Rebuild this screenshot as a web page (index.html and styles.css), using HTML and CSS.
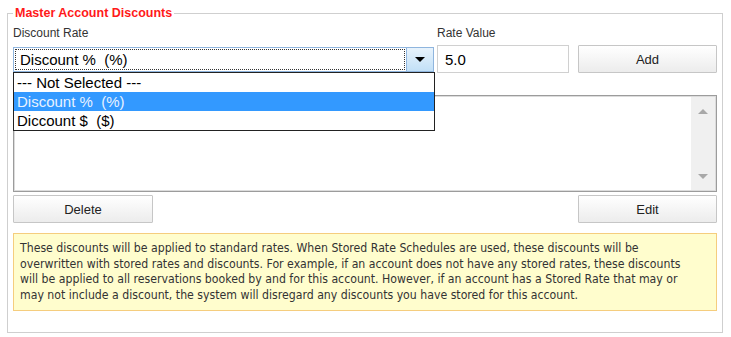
FILE: index.html
```html
<!DOCTYPE html>
<html lang="en">
<head>
    <meta charset="UTF-8">
    <title>Master Account Discounts</title>
    <link rel="stylesheet" href="styles.css">
</head>
<body>
    <fieldset class="panel">
        <legend>Master Account Discounts</legend>

        <!-- Linha de entrada: tipo, valor e botão Add -->
        <div class="entry-row">
            <div class="field field-type">
                <label>Discount Rate</label>
                <div class="select-wrap">
                    <div class="select">
                        <span class="select-value">Discount %  (%)</span>
                        <span class="select-arrow"></span>
                    </div>
                    <ul class="select-list">
                        <li>--- Not Selected ---</li>
                        <li class="selected">Discount %  (%)</li>
                        <li>Diccount $  ($)</li>
                    </ul>
                </div>
            </div>
            <div class="field field-value">
                <label>Rate Value</label>
                <input type="text" class="text-input" value="5.0">
            </div>
            <button class="btn btn-add">Add</button>
        </div>

        <!-- Lista de descontos -->
        <div class="listbox">
            <div class="listbox-body"></div>
            <div class="scrollbar">
                <span class="arrow-up"></span>
                <span class="arrow-down"></span>
            </div>
        </div>

        <div class="button-row">
            <button class="btn">Delete</button>
            <button class="btn">Edit</button>
        </div>

        <div class="note">
            These discounts will be applied to standard rates. When Stored Rate Schedules are used, these discounts will be<br>
            overwritten with stored rates and discounts. For example, if an account does not have any stored rates, these discounts<br>
            will be applied to all reservations booked by and for this account. However, if an account has a Stored Rate that may or<br>
            may not include a discount, the system will disregard any discounts you have stored for this account.
        </div>
    </fieldset>
</body>
</html>
```

FILE: styles.css
```css
/* Página */
body {
    margin: 0;
    padding: 0;
    background-color: #ffffff;
    font-family: 'Liberation Sans', Arial, sans-serif;
    color: #222;
}

/* Moldura principal */
.panel {
    box-sizing: border-box;
    width: 716px;
    margin: 5px 0 0 7px;
    padding: 5px 5px 21px 5px;
    border: 1px solid #cfcfcf;
    min-inline-size: 0;
}

.panel legend {
    padding: 0 2px;
    font-size: 12.5px;
    line-height: 16px;
    font-weight: bold;
    color: #ff1a1a;
}

/* Linha de entrada */
.entry-row {
    display: flex;
    align-items: flex-start;
}

.field {
    display: flex;
    flex-direction: column;
}

.field label {
    font-size: 12px;
    line-height: 14px;
    color: #333;
}

.field-type {
    width: 421px;
    margin-right: 3px;
}

.field-type label {
    margin-bottom: 7px;
}

.field-value {
    width: 132px;
    margin-right: 9px;
}

.field-value label {
    margin-bottom: 5px;
}

/* Select simulado aberto */
.select-wrap {
    position: relative;
}

.select {
    box-sizing: border-box;
    height: 25px;
    display: flex;
    border: 1px solid #8fb5de;
    background-color: #ffffff;
}

.select-value {
    flex: 1;
    margin: 1px;
    padding-left: 4px;
    border: 1px dotted #333;
    font-size: 15px;
    line-height: 19px;
    color: #000;
    white-space: pre;
}

.select-arrow {
    width: 26px;
    border-left: 1px solid #8fb5de;
    background: linear-gradient(#e8f3fc, #c2e0f7);
    position: relative;
}

.select-arrow::after {
    content: "";
    position: absolute;
    left: 8px;
    top: 9px;
    border-left: 5px solid transparent;
    border-right: 5px solid transparent;
    border-top: 5px solid #000;
}

.select-list {
    position: absolute;
    top: 100%;
    left: 0;
    right: -1px;
    margin: 0;
    padding: 0;
    list-style: none;
    background-color: #ffffff;
    border: 1px solid #222;
    box-sizing: border-box;
    z-index: 5;
}

.select-list li {
    height: 19px;
    padding-left: 3px;
    font-size: 15px;
    line-height: 19px;
    color: #000;
    white-space: pre;
}

.select-list li.selected {
    background-color: #3399ff;
    color: #e8f2ff;
}

/* Campo de valor */
.text-input {
    box-sizing: border-box;
    width: 100%;
    height: 28px;
    margin: 0;
    padding: 0 7px;
    border: 1px solid #d0d0d0;
    font-family: inherit;
    font-size: 15px;
    color: #000;
    outline: none;
}

/* Botões */
.btn {
    box-sizing: border-box;
    height: 28px;
    width: 139px;
    padding: 0;
    border: 1px solid #c6c6c6;
    border-radius: 1px;
    background: linear-gradient(#ffffff, #ececec);
    font-family: inherit;
    font-size: 13px;
    color: #222;
    cursor: pointer;
}

.btn-add {
    margin-top: 19px;
}

.button-row {
    display: flex;
    justify-content: space-between;
    margin-top: 3px;
}

.button-row .btn:first-child {
    width: 140px;
}

/* Lista */
.listbox {
    box-sizing: border-box;
    display: flex;
    height: 97px;
    margin-top: 22px;
    border: 1px solid #9c9c9c;
    box-shadow: inset 0 0 0 1px #dcdcdc;
}

.listbox-body {
    flex: 1;
}

.scrollbar {
    width: 24px;
    margin: 1px 1px 1px 0;
    background-color: #f0f0f0;
    display: flex;
    flex-direction: column;
    justify-content: space-between;
    align-items: center;
    padding: 12px 0 11px 0;
}

.arrow-up {
    border-left: 5px solid transparent;
    border-right: 5px solid transparent;
    border-bottom: 5px solid #a8a8a8;
}

.arrow-down {
    border-left: 5px solid transparent;
    border-right: 5px solid transparent;
    border-top: 5px solid #a8a8a8;
}

/* Aviso amarelo */
.note {
    box-sizing: border-box;
    margin-top: 10px;
    padding: 7px 6px 7px 6px;
    border: 1px solid #f5cd7e;
    background-color: #fffdcd;
    font-family: 'DejaVu Sans Condensed', 'DejaVu Sans', sans-serif;
    font-size: 12.2px;
    line-height: 15.5px;
    color: #333;
    white-space: nowrap;
}
```
